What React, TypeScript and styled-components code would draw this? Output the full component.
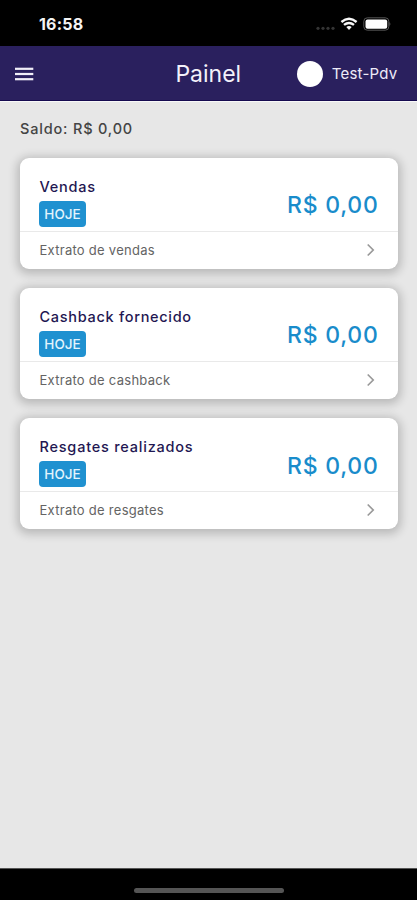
import React from 'react';
import styled, { createGlobalStyle } from 'styled-components';

const GlobalStyle = createGlobalStyle`
  * { box-sizing: border-box; }
  body { margin: 0; background: #e7e7e7; font-family: Inter, "Liberation Sans", sans-serif; }
`;

const Screen = styled.div`
  width: 417px;
  height: 900px;
  display: flex;
  flex-direction: column;
  background: #e7e7e7;
  overflow: hidden;
`;

const StatusBar = styled.div`
  height: 46px;
  flex: none;
  display: flex;
  justify-content: space-between;
  align-items: center;
  padding: 2px 26px 0 39px;
  background: #000;
`;

const Clock = styled.span`
  color: #f4f4f4;
  font-size: 16px;
  font-weight: 700;
  line-height: 20px;
  letter-spacing: 0.2px;
`;

const Header = styled.header`
  height: 55px;
  flex: none;
  display: grid;
  grid-template-columns: 1fr auto 1fr;
  align-items: center;
  padding: 1px 19.5px 0 15px;
  background: #2a205e;
  border-bottom: 1px solid #160b50;
`;

const MenuButton = styled.button`
  display: flex;
  width: 19px;
  padding: 0;
  border: 0;
  background: none;
`;

const Title = styled.h1`
  margin: 0 0 0 4px;
  color: #f3f1fa;
  font-size: 23px;
  font-weight: 400;
  line-height: 28px;
  letter-spacing: 0;
`;

const Account = styled.div`
  display: flex;
  align-items: center;
  justify-content: flex-end;
  gap: 9px;
`;

const Avatar = styled.span`
  width: 26px;
  height: 26px;
  flex: none;
  border-radius: 50%;
  background: #fff;
`;

const AccountName = styled.span`
  color: #eeebf8;
  font-size: 15px;
  line-height: 18px;
  letter-spacing: 0.25px;
  white-space: nowrap;
`;

const Content = styled.main`
  flex: 1;
  padding: 17px 19.5px 0 20px;
  border-top: 1px solid #f8f8f8;
`;

const Balance = styled.p`
  margin: 0 0 20px;
  color: #444;
  font-size: 14.5px;
  font-weight: 450;
  line-height: 19px;
  letter-spacing: 0.82px;
`;

const CardList = styled.div`
  display: flex;
  flex-direction: column;
  gap: 19.2px;
`;

const Card = styled.section`
  height: 111px;
  border-radius: 9px;
  background: #fff;
  box-shadow: 0 2px 10px 3px rgba(0, 0, 0, 0.2);
`;

const Summary = styled.div`
  height: 74px;
  display: flex;
  justify-content: space-between;
  padding: 19px 19px 0 19.5px;
  border-bottom: 1px solid #e9e9e9;
`;

const CardTitle = styled.h2<{ $spacing: number }>`
  margin: 0 0 5px;
  color: #1f1752;
  font-size: 14.5px;
  font-weight: 500;
  line-height: 19px;
  letter-spacing: ${(p) => p.$spacing}px;
`;

const Badge = styled.span`
  display: flex;
  align-items: center;
  justify-content: center;
  width: 47px;
  height: 26px;
  margin-left: -0.5px;
  border-radius: 4px;
  background: #1f91d0;
  color: #e3f4fd;
  font-size: 13.5px;
  font-weight: 500;
`;

const Amount = styled.strong`
  margin-top: 14.3px;
  color: #198ccb;
  font-size: 23px;
  font-weight: 500;
  line-height: 28px;
  letter-spacing: 0.75px;
`;

const StatementLink = styled.div`
  height: 37px;
  display: flex;
  align-items: center;
  justify-content: space-between;
  padding: 0 22.5px 1px 19.5px;
  color: #646464;
  font-size: 13px;
  letter-spacing: 0.27px;
`;

const HomeBar = styled.footer`
  height: 32px;
  flex: none;
  display: flex;
  justify-content: center;
  padding-top: 19px;
  background: #000;
  border-top: 1px solid #555;
`;

const HomeIndicator = styled.span`
  width: 150px;
  height: 5px;
  border-radius: 3px;
  background: #555;
`;

const cards = [
  { title: 'Vendas', link: 'Extrato de vendas', spacing: 0.75 },
  { title: 'Cashback fornecido', link: 'Extrato de cashback', spacing: 0.7 },
  { title: 'Resgates realizados', link: 'Extrato de resgates', spacing: 0.78 },
];

const StatusIcons = () => (
  <svg width="76" height="16" viewBox="0 0 76 16">
    <g fill="#353535">
      <circle cx="3" cy="12.3" r="1.6" />
      <circle cx="8" cy="12.3" r="1.6" />
      <circle cx="13" cy="12.3" r="1.6" />
      <circle cx="18" cy="12.3" r="1.6" />
    </g>
    <g fill="none" stroke="#f7f7f7" strokeWidth="2.4">
      <path d="M26.4 6Q34 -0.4 41.6 6" />
      <path d="M29 8.9Q34 4.9 39 8.9" />
    </g>
    <path d="M31.3 11Q34 8.8 36.7 11L34 14Z" fill="#f7f7f7" />
    <rect x="48.8" y="1.8" width="25" height="12.4" rx="3.5" fill="none" stroke="#555" />
    <rect x="50.5" y="3.4" width="21.7" height="9.3" rx="2" fill="#fff" />
    <path d="M74.5 6Q76.2 8 74.5 10Z" fill="#666" />
  </svg>
);

export default function App() {
  return (
    <>
      <GlobalStyle />
      <Screen>
        <StatusBar>
          <Clock>16:58</Clock>
          <StatusIcons />
        </StatusBar>
        <Header>
          <MenuButton aria-label="Menu">
            <svg width="19" height="14" viewBox="0 0 19 14" fill="#f0eef8">
              <rect y="0.7" width="18.3" height="2.2" />
              <rect y="5.9" width="18.3" height="2.2" />
              <rect y="11.1" width="18.3" height="2.2" />
            </svg>
          </MenuButton>
          <Title>Painel</Title>
          <Account>
            <Avatar />
            <AccountName>Test-Pdv</AccountName>
          </Account>
        </Header>
        <Content>
          <Balance>Saldo: R$ 0,00</Balance>
          <CardList>
            {cards.map((card) => (
              <Card key={card.title}>
                <Summary>
                  <div>
                    <CardTitle $spacing={card.spacing}>{card.title}</CardTitle>
                    <Badge>HOJE</Badge>
                  </div>
                  <Amount>R$ 0,00</Amount>
                </Summary>
                <StatementLink>
                  <span>{card.link}</span>
                  <svg width="9" height="14" viewBox="0 0 9 14" fill="none">
                    <path d="M1.7 1.5L7.2 7L1.7 12.5" stroke="#999" strokeWidth="1.7" />
                  </svg>
                </StatementLink>
              </Card>
            ))}
          </CardList>
        </Content>
        <HomeBar>
          <HomeIndicator />
        </HomeBar>
      </Screen>
    </>
  );
}
